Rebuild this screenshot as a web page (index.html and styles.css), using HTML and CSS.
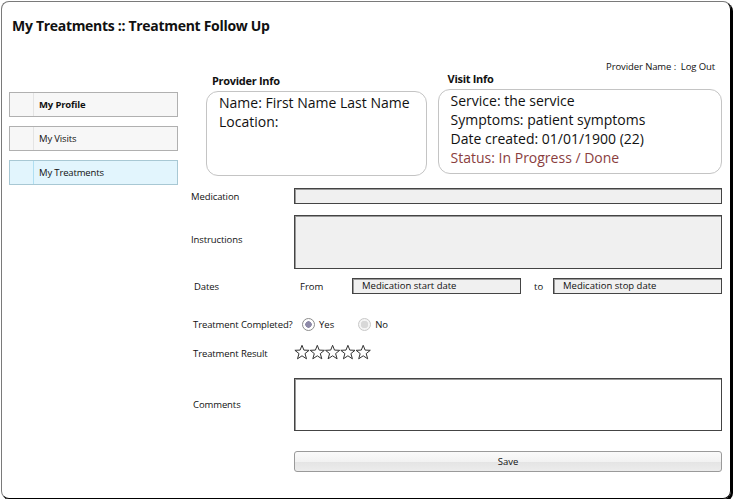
FILE: index.html
```html
<!DOCTYPE html>
<html>
<head>
<meta charset="utf-8">
<link rel="stylesheet" href="styles.css">
</head>
<body>
<div class="frame">
  <div class="title">My Treatments :: Treatment Follow Up</div>
  <div class="body">
    <nav class="sidebar">
      <div class="navitem bold"><span class="cell"></span><span class="navtext">My Profile</span></div>
      <div class="navitem"><span class="cell"></span><span class="navtext">My Visits</span></div>
      <div class="navitem active"><span class="cell"></span><span class="navtext">My Treatments</span></div>
    </nav>
    <main class="main">
      <div class="topline">Provider Name :&nbsp; Log Out</div>
      <div class="inforow">
        <section class="info provider">
          <div class="infolabel">Provider Info</div>
          <div class="infobox">
            <div>Name: First Name Last Name</div>
            <div>Location:</div>
          </div>
        </section>
        <section class="info visit">
          <div class="infolabel">Visit Info</div>
          <div class="infobox">
            <div>Service: the service</div>
            <div>Symptoms: patient symptoms</div>
            <div>Date created: 01/01/1900 (22)</div>
            <div class="status">Status: In Progress / Done</div>
          </div>
        </section>
      </div>
      <div class="form">
        <div class="row r-med"><label class="lbl">Medication</label><div class="field input"></div></div>
        <div class="row r-ins"><label class="lbl">Instructions</label><div class="field area"></div></div>
        <div class="row r-dates"><label class="lbl lbl-dates">Dates</label>
          <div class="datefield">
            <span class="from">From</span>
            <span class="dinput">Medication start date</span>
            <span class="to">to</span>
            <span class="dinput stop">Medication stop date</span>
          </div>
        </div>
        <div class="row r-comp"><label class="lbl">Treatment Completed?</label>
          <div class="radios">
            <span class="radio on"></span><span class="rtext">Yes</span>
            <span class="radio off"></span><span class="rtext">No</span>
          </div>
        </div>
        <div class="row r-res"><label class="lbl">Treatment Result</label>
          <div class="stars">
            <svg width="78" height="16" viewBox="0 0 78 16">
              <defs>
                <polygon id="st" points="7.5,0.8 9.4,5.6 14.6,5.8 10.5,9.1 12,14.3 7.5,11.3 3,14.3 4.5,9.1 0.4,5.8 5.6,5.6" fill="none" stroke="#333" stroke-width="1"/>
              </defs>
              <use href="#st" x="0.5" y="0.5"/>
              <use href="#st" x="15.8" y="0.5"/>
              <use href="#st" x="31.1" y="0.5"/>
              <use href="#st" x="46.4" y="0.5"/>
              <use href="#st" x="61.7" y="0.5"/>
            </svg>
          </div>
        </div>
        <div class="row r-com"><label class="lbl">Comments</label><div class="field comments"></div></div>
        <div class="row r-save"><span class="lbl"></span><button class="save">Save</button></div>
      </div>
    </main>
  </div>
</div>
</body>
</html>
```
FILE: styles.css
```css
* { box-sizing: border-box; }
html, body { margin: 0; padding: 0; background: #fff; }
body { font-family: "Open Sans", "DejaVu Sans", sans-serif; color: #111; }

.frame {
  margin: 1px 0 0 1px;
  width: 730px;
  height: 498px;
  border: 1px solid;
  border-color: #7a7a7a #000 #000 #7a7a7a;
  border-radius: 8px;
  box-shadow: 2px 2px 0 #000;
}

.title {
  padding: 15px 0 0 10px;
  font-size: 14px;
  font-weight: bold;
  line-height: 18px;
  letter-spacing: -0.3px;
}

.body {
  display: flex;
  margin-top: 26px;
}

.sidebar {
  flex: none;
  width: 169px;
  margin-left: 7px;
  margin-top: 31px;
  display: flex;
  flex-direction: column;
  gap: 9px;
}
.navitem {
  display: flex;
  height: 25px;
  border: 1px solid #b0b0b0;
  background: #f7f7f7;
  font-size: 9.5px;
  align-items: center;
  letter-spacing: -0.15px;
}
.navitem .cell {
  width: 24px;
  height: 100%;
  border-right: 1px solid #e4e4e4;
}
.navitem .navtext { padding-left: 5px; }
.navitem.bold { font-weight: bold; }
.navitem.active { background: #e2f5fd; border-color: #a8c8d4; }
.navitem.active .cell { border-right-color: #b0dff2; }

.main {
  flex: 1;
  min-width: 0;
  margin-left: 13px;
  padding-right: 8px;
}
.topline {
  text-align: right;
  font-size: 9.5px;
  line-height: 11px;
  padding-right: 7px;
  letter-spacing: -0.1px;
}
.inforow {
  display: flex;
  gap: 11px;
  margin-left: 15px;
}
.info .infolabel {
  font-size: 11px;
  font-weight: bold;
  line-height: 14px;
  letter-spacing: -0.3px;
}
.provider { width: 221px; padding-top: 2px; }
.provider .infolabel { padding-left: 6px; }
.visit { width: 285px; }
.visit .infolabel { padding-left: 10px; }
.infobox {
  margin-top: 3px;
  height: 85px;
  border: 1px solid #c4c4c4;
  border-radius: 12px;
  padding: 1px 0 0 12px;
  font-size: 14px;
  line-height: 19px;
  letter-spacing: 0;
}
.status { color: #8a3e3e; }

.form { margin-top: 12px; }
.row {
  display: flex;
  align-items: center;
}
.lbl {
  width: 103px;
  flex: none;
  font-size: 9.5px;
  padding-left: 0;
  letter-spacing: -0.1px;
}
.field {
  flex: 1;
  background: #f0f0f0;
  border: 1px solid #444;
  box-shadow: inset 1px 1px 0 #999;
}
.input { height: 16px; }
.r-ins { margin-top: 11px; }
.area { height: 54px; }
.r-ins .lbl { padding-bottom: 6px; }
.r-dates { margin-top: 9px; }
.lbl-dates { padding-left: 3px; }
.datefield {
  flex: 1;
  display: flex;
  align-items: center;
  font-size: 9.5px;
}
.from { width: 58px; padding-left: 6px; }
.dinput {
  width: 169px;
  height: 16px;
  border: 1px solid #444;
  box-shadow: inset 1px 1px 0 #999;
  background: #f0f0f0;
  padding-left: 9px;
  line-height: 13px;
}
.to { width: 32px; padding-left: 13px; }
.r-comp { margin-top: 24px; }
.r-comp .lbl, .r-res .lbl, .r-com .lbl { padding-left: 2px; }
.radios { display: flex; align-items: center; font-size: 9.5px; }
.radio {
  width: 13px;
  height: 13px;
  border-radius: 50%;
  border: 1px solid #8c8c8c;
  background: radial-gradient(circle, #8e8aa8 0 3px, #fff 3.5px);
  margin-left: 8px;
}
.radio.off {
  border-color: #c8c8c8;
  background: radial-gradient(circle, #d8d8d8 0 3.5px, #f4f4f4 4px);
  margin-left: 24px;
}
.rtext { padding-left: 4px; }
.r-res { margin-top: 13px; align-items: flex-end; }
.r-res .lbl { line-height: 12px; }
.stars { height: 16px; }
.stars svg { display: block; }
.r-com { margin-top: 18px; }
.comments { height: 53px; background: #fff; }
.r-save { margin-top: 20px; }
.save {
  flex: 1;
  height: 21px;
  font-family: "Open Sans", "DejaVu Sans", sans-serif;
  font-size: 9.5px;
  color: #111;
  border: 1px solid #9a9a9a;
  border-radius: 3px;
  background: linear-gradient(#fafafa, #f2f2f2 50%, #e4e4e4 51%, #ececec);
  padding: 0;
}
```
